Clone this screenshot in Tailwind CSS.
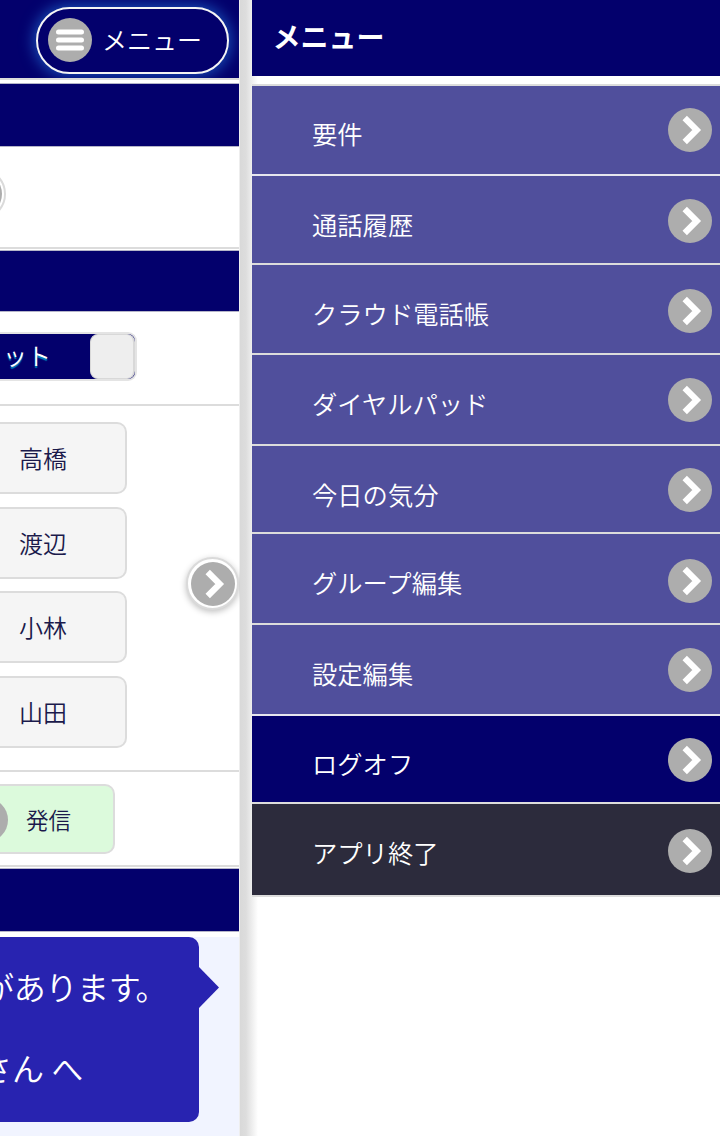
<!DOCTYPE html>
<html lang="ja">
<head>
<meta charset="utf-8">
<title>メニュー</title>
<script src="https://cdn.jsdelivr.net/npm/@tailwindcss/browser@4"></script>
</head>
<body class="bg-white font-['Noto_Sans_CJK_JP',sans-serif] font-[350]">
<svg class="hidden">
  <symbol id="chev" viewBox="0 0 44 44"><circle cx="22" cy="22" r="22" fill="#adadad"/><path d="M16.7 10L28.7 22L16.7 34" fill="none" stroke="#fff" stroke-width="6.2"/></symbol>
</svg>
<div class="flex h-[1136px] w-[720px] overflow-hidden bg-white">

  <!-- page -->
  <div class="flex h-full w-[240px] shrink-0 flex-col border-r border-[#eeeeee] text-[#1b1a4b]">
    <header class="flex h-[80px] shrink-0 justify-end overflow-hidden border-b-2 border-[#dcdcdc] bg-[#03006c] pt-[7px] pr-[10px]">
      <div class="flex h-[67px] w-[193px] items-center rounded-full border-2 border-[#f5f5f5] bg-[#03006c] pl-[10px] shadow-[0_0_14px_3px_#1748b0]">
        <svg class="-mt-[2px] size-[44px]" viewBox="0 0 44 44"><circle cx="22" cy="22" r="22" fill="#adadad"/><path d="M10.500 14H33.500M10.500 22H33.500M10.500 30H33.500" stroke="#fff" stroke-width="5" stroke-linecap="round"/></svg>
        <span class="-mt-[4px] ml-[10px] text-[25px] leading-[36px] whitespace-nowrap text-white">メニュー</span>
      </div>
    </header>
    <div class="mt-[3px] h-[64px] shrink-0 border-y border-[#b5b5c8] bg-[#03006c]"></div>
    <div class="flex h-[102px] shrink-0 items-start overflow-hidden border-b-2 border-[#dcdcdc] pt-[21px]">
      <div class="-ml-[46px] flex size-[52px] shrink-0 items-center justify-center rounded-full border-2 border-[#dadada] bg-white"><svg class="size-[44px]"><use href="#chev"/></svg></div>
    </div>
    <div class="mt-px h-[62px] shrink-0 border-y border-[#b5b5c8] bg-[#03006c]"></div>
    <div class="flex h-[94px] shrink-0 items-start border-b-2 border-[#dcdcdc] pt-[20px]">
      <div class="flex h-[49px] w-[137px] items-center justify-end rounded-r-[9px] border-2 border-l-0 border-[#e4e4e4] bg-[#03006c]">
        <span class="-mt-[3px] mr-[39px] text-[24px] leading-[36px] text-white [text-shadow:0_2px_1px_#0088c0]">ット</span>
        <div class="-mt-px h-[45px] w-[45px] rounded-[8px] border border-r-2 border-[#d8d8d8] bg-[#eeeeee]"></div>
      </div>
    </div>
    <div class="flex h-[366px] shrink-0 items-start border-b-2 border-[#dcdcdc] pt-[16px]">
      <div class="flex w-[127px] flex-col gap-[12.670px] text-[24px] leading-[36px]">
        <div class="flex h-[72px] items-center rounded-r-[10px] border-2 border-l-0 border-[#dcdcdc] bg-[#f5f5f5] pl-[19px]">高橋</div>
        <div class="flex h-[72px] items-center rounded-r-[10px] border-2 border-l-0 border-[#dcdcdc] bg-[#f5f5f5] pl-[19px]">渡辺</div>
        <div class="flex h-[72px] items-center rounded-r-[10px] border-2 border-l-0 border-[#dcdcdc] bg-[#f5f5f5] pl-[19px]">小林</div>
        <div class="flex h-[72px] items-center rounded-r-[10px] border-2 border-l-0 border-[#dcdcdc] bg-[#f5f5f5] pl-[19px]">山田</div>
      </div>
      <div class="mt-[135px] ml-[59px] flex size-[53px] shrink-0 items-center justify-center rounded-full border-2 border-[#dadada] bg-white pt-px shadow-[0_2px_6px_#00000040]"><svg class="size-[44px] shrink-0"><use href="#chev"/></svg></div>
    </div>
    <div class="flex h-[95px] shrink-0 items-start border-b-2 border-[#dcdcdc] pt-[12px]">
      <div class="flex h-[70px] w-[115px] items-center overflow-hidden rounded-r-[10px] border-2 border-l-0 border-[#dcdcdc] bg-[#dcfadc]">
        <svg class="mt-[2px] -ml-[36px] size-[44px] shrink-0"><use href="#chev"/></svg>
        <span class="ml-[18px] text-[22.500px] leading-[34px] whitespace-nowrap">発信</span>
      </div>
    </div>
    <div class="mt-px h-[64px] shrink-0 border-y border-[#b5b5c8] bg-[#03006c]"></div>
    <div class="mt-[5px] flex flex-1 items-start overflow-hidden bg-[#f1f4ff]">
      <div class="flex h-[185px] w-[199px] shrink-0 flex-col items-start gap-[33px] rounded-r-[10px] bg-[#2823b0] pt-[25px] text-[32px] leading-[48px] whitespace-nowrap text-white">
        <div class="-ml-[18px] tracking-[-0.3px]">があります<span class="-ml-[5px]">。</span></div>
        <div class="-ml-[20px]">さん へ</div>
      </div>
      <svg class="mt-[30px] h-[41px] w-[20px]" viewBox="0 0 20 41"><path d="M0 0L20 20.500L0 41Z" fill="#2823b0"/></svg>
    </div>
  </div>

  <!-- drawer edge -->
  <div class="h-full w-[12px] shrink-0 bg-linear-to-r from-[#d9d9d9] via-[#dddddd] to-[#eeeeee]"></div>

  <!-- drawer -->
  <div class="flex h-full w-[468px] shrink-0 flex-col bg-linear-to-r from-[#eeeeee] to-white to-[6px] text-white">
    <div class="h-[76px] shrink-0 bg-[#03006c] pt-[16px] pl-[20.500px] text-[28px] leading-[40px] font-bold">メニュー</div>
    <nav class="mt-[8px] flex flex-col border-b-2 border-[#dcdcdc] text-[25.300px] leading-[38px]">
      <div class="flex h-[90px] items-start justify-between border-t-2 border-[#dcdcdc] bg-[#504f9c] pr-[8px] pl-[60px]"><span class="mt-[28px]">要件</span><svg class="mt-[22px] size-[44px]"><use href="#chev"/></svg></div>
      <div class="flex h-[89px] items-start justify-between border-t-2 border-[#e6e6ee] bg-[#504f9c] pr-[8px] pl-[60px]"><span class="mt-[29px]">通話履歴</span><svg class="mt-[23px] size-[44px]"><use href="#chev"/></svg></div>
      <div class="flex h-[90px] items-start justify-between border-t-2 border-[#dcdcdc] bg-[#504f9c] pr-[8px] pl-[60px]"><span class="mt-[29px]">クラウド電話帳</span><svg class="mt-[24px] size-[44px]"><use href="#chev"/></svg></div>
      <div class="flex h-[91px] items-start justify-between border-t-2 border-[#dcdcdc] bg-[#504f9c] pr-[8px] pl-[60px]"><span class="mt-[29px]">ダイヤルパッド</span><svg class="mt-[23px] size-[44px]"><use href="#chev"/></svg></div>
      <div class="flex h-[88px] items-start justify-between border-t-2 border-[#dcdcdc] bg-[#504f9c] pr-[8px] pl-[60px]"><span class="mt-[29px]">今日の気分</span><svg class="mt-[22px] size-[44px]"><use href="#chev"/></svg></div>
      <div class="flex h-[91px] items-start justify-between border-t-2 border-[#dcdcdc] bg-[#504f9c] pr-[8px] pl-[60px]"><span class="mt-[29px]">グループ編集</span><svg class="mt-[25px] size-[44px]"><use href="#chev"/></svg></div>
      <div class="flex h-[91px] items-start justify-between border-t-2 border-[#dcdcdc] bg-[#504f9c] pr-[8px] pl-[60px]"><span class="mt-[29px]">設定編集</span><svg class="mt-[23px] size-[44px]"><use href="#chev"/></svg></div>
      <div class="flex h-[88px] items-start justify-between border-t-2 border-[#e6e6ee] bg-[#03006c] pr-[8px] pl-[60px]"><span class="mt-[28px]">ログオフ</span><svg class="mt-[22px] size-[44px]"><use href="#chev"/></svg></div>
      <div class="flex h-[93px] items-start justify-between border-t-2 border-[#dcdcdc] bg-[#2c2b3c] pr-[8px] pl-[60px]"><span class="mt-[29px]">アプリ終了</span><svg class="mt-[25px] size-[44px]"><use href="#chev"/></svg></div>
    </nav>
  </div>
</div>
</body>
</html>
